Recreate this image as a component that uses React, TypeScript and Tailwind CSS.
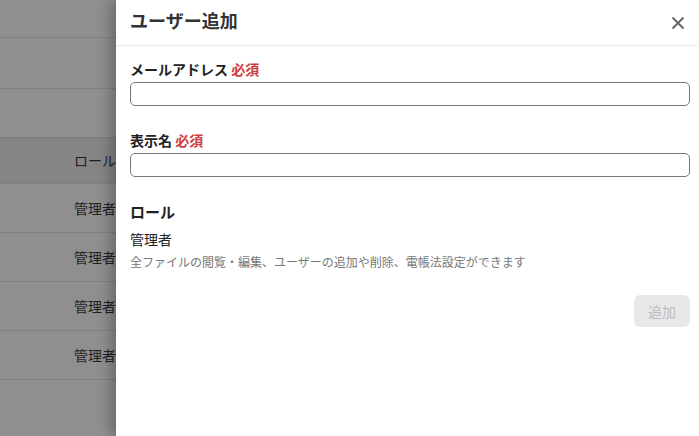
import React from "react";

const FONT = "font-['Noto_Sans_CJK_JP','Noto_Sans',sans-serif]";

function BackdropRow({ h, label, head }: { h: string; label?: string; head?: boolean }) {
  return (
    <div
      className={`${h} flex items-center border-b border-[#7f7f7f] pl-[74px] text-[14px] text-[#1f1f1f] ${
        head ? "bg-[#858585]" : "bg-[#8f8f8f]"
      }`}
    >
      {label}
    </div>
  );
}

function Field({ label }: { label: string }) {
  return (
    <div>
      <div className="text-[14px] font-bold leading-[20px] text-[#222]">
        {label} <span className="text-[#d13c3c]">必須</span>
      </div>
      <input
        type="text"
        className="mt-[3px] block h-[24px] w-[560px] rounded-[5px] border border-[#777] bg-white outline-none"
      />
    </div>
  );
}

export default function App() {
  return (
    <div className={`relative h-[436px] w-[699px] overflow-hidden bg-[#8f8f8f] ${FONT}`}>
      <div className="flex flex-col">
        <BackdropRow h="h-[38px]" />
        <BackdropRow h="h-[51px]" />
        <BackdropRow h="h-[49px]" />
        <BackdropRow h="h-[46px]" label="ロール" head />
        <BackdropRow h="h-[49px]" label="管理者" />
        <BackdropRow h="h-[49px]" label="管理者" />
        <BackdropRow h="h-[49px]" label="管理者" />
        <BackdropRow h="h-[49px]" label="管理者" />
      </div>

      <div className="absolute inset-y-0 left-[116px] right-0 bg-white shadow-[-6px_0_12px_rgba(0,0,0,0.25)]">
        <div className="mr-[1px] flex h-[46px] items-center justify-between border-b border-[#ebebeb] pl-[14px] pr-[13px]">
          <div className="mb-[5px] text-[18px] font-bold text-[#333]">ユーザー追加</div>
          <svg width="14" height="14" viewBox="0 0 14 14" className="mt-[1px]">
            <path d="M1.5 1.5 L12.5 12.5 M12.5 1.5 L1.5 12.5" stroke="#666" strokeWidth="2" />
          </svg>
        </div>

        <div className="flex flex-col pl-[14px] pt-[13px]">
          <Field label="メールアドレス" />
          <div className="mt-[24px]">
            <Field label="表示名" />
          </div>
          <div className="mt-[25px] text-[15px] font-bold leading-[20px] text-[#222]">ロール</div>
          <div className="mt-[7px] text-[14px] leading-[20px] text-[#222]">管理者</div>
          <div className="mt-[4px] text-[12px] leading-[18px] text-[#777]">
            全ファイルの閲覧・編集、ユーザーの追加や削除、電帳法設定ができます
          </div>
          <div className="mt-[24px] flex w-[560px] justify-end">
            <button className="h-[32px] w-[56px] rounded-[6px] bg-[#e8e8e8] text-[14px] text-[#bdbdbd]">
              追加
            </button>
          </div>
        </div>
      </div>
    </div>
  );
}
